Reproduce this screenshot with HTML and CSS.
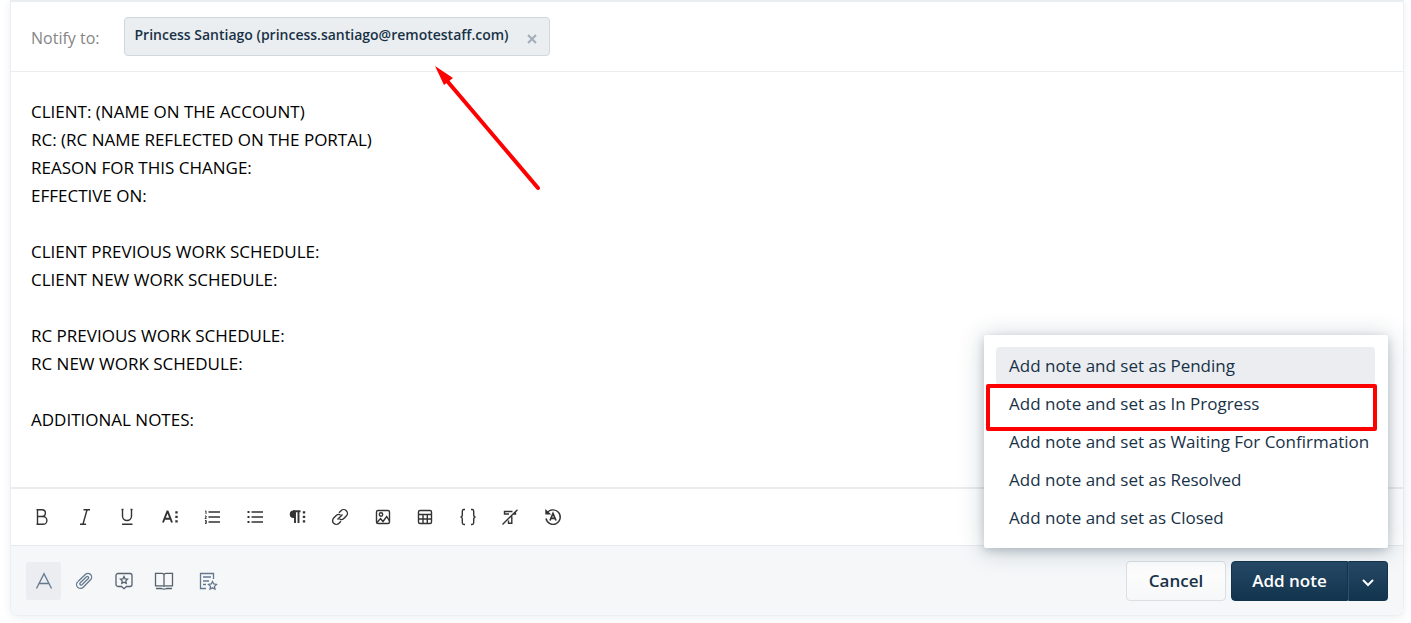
FILE: index.html
```html
<!DOCTYPE html>
<html lang="en">
<head>
<meta charset="utf-8">
<title>Add note</title>
<link rel="stylesheet" href="styles.css">
</head>
<body>
<form class="composer">
  <div class="notify">
    <span class="notify-label">Notify to:</span>
    <span class="chip">
      <span class="chip-text">Princess Santiago (princess.santiago@remotestaff.com)</span>
      <button type="button" class="chip-remove" aria-label="Remove recipient">
        <svg width="10" height="10" viewBox="0 0 10 10"><path d="M1 1l8 8M9 1L1 9"/></svg>
      </button>
    </span>
    <svg class="arrow" width="112" height="130" viewBox="0 0 112 130" aria-hidden="true">
      <path d="M13 16L103 122" stroke="#f00" stroke-width="4" stroke-linecap="round"/>
      <path d="M0 0L18 12L9 19Z" fill="#f00"/>
    </svg>
  </div>

  <textarea class="editor" rows="12" aria-label="Note" spellcheck="false">CLIENT: (NAME ON THE ACCOUNT)
RC: (RC NAME REFLECTED ON THE PORTAL)
REASON FOR THIS CHANGE:
EFFECTIVE ON:

CLIENT PREVIOUS WORK SCHEDULE:
CLIENT NEW WORK SCHEDULE:

RC PREVIOUS WORK SCHEDULE:
RC NEW WORK SCHEDULE:

ADDITIONAL NOTES:</textarea>

  <div class="toolbar">
    <div class="tools">
      <button type="button" class="tool" aria-label="Bold"><svg viewBox="0 0 20 20"><path d="M5.500 2.700v14.600M4.500 2.700H10a3.400 3.400 0 0 1 0 6.800H5.500M10 9.500h1a3.900 3.900 0 0 1 0 7.800H4.500"/></svg></button>
      <button type="button" class="tool" aria-label="Italic"><svg viewBox="0 0 20 20"><path d="M8.500 2.700H15M5 17.300h6M12 3L8 17"/></svg></button>
      <button type="button" class="tool" aria-label="Underline"><svg viewBox="0 0 20 20"><path d="M5.500 2.500V9a4.500 4.500 0 0 0 9 0V2.500M4.500 2.500h2M13.500 2.500h2M5 17.300h10.500"/></svg></button>
      <button type="button" class="tool" aria-label="Font size"><svg viewBox="0 0 20 20"><path stroke-width="1.900" d="M3 15.500L7.300 4.500h.4L12 15.500M4.700 11.700h5.600"/><path stroke-width="2.400" d="M15.300 5.400h2.400M15.300 9.900h2.400M15.300 14.400h2.400"/></svg></button>
      <button type="button" class="tool" aria-label="Numbered list"><svg viewBox="0 0 20 20"><path d="M6.500 5H18M6.500 10H18M6.500 15H18"/><path stroke-width="1" d="M3 4h1v3M3 9h1.200v1L3 11.500h1.500M3 13.500h1.300v3H3M3 15h1"/></svg></button>
      <button type="button" class="tool" aria-label="Bulleted list"><svg viewBox="0 0 20 20"><path d="M6.500 5H18M6.500 10H18M6.500 15H18"/><path stroke-width="2" d="M2.500 5h2M2.500 10h2M2.500 15h2"/></svg></button>
      <button type="button" class="tool" aria-label="Paragraph"><svg viewBox="0 0 20 20"><path fill="#333" stroke="none" d="M8 3.500v7.500H6.500A3.700 3.700 0 0 1 6.500 3.500z"/><path stroke-width="1.900" d="M6 4.300h7.500M8 4v12M11.500 4v12"/><path stroke-width="2.400" d="M15.800 5.400h2.400M15.800 9.900h2.400M15.800 14.400h2.400"/></svg></button>
      <button type="button" class="tool" aria-label="Link"><svg viewBox="0 0 20 20"><path d="M9 5.700l2-2a3.700 3.700 0 0 1 5.300 5.300l-2.500 2.500a3.700 3.700 0 0 1-4.300.600M11 14.300l-2 2A3.700 3.700 0 0 1 3.700 11l2.500-2.500a3.700 3.700 0 0 1 4.300-.600M7.500 12.500l5-5"/></svg></button>
      <button type="button" class="tool" aria-label="Image"><svg viewBox="0 0 20 20"><rect x="3.500" y="3.500" width="13" height="13" rx="1.500"/><circle cx="8" cy="7.500" r="1.700"/><path d="M4 15.500l3.500-4 2.500 3 3.700-5 2.800 4.500"/></svg></button>
      <button type="button" class="tool" aria-label="Table"><svg viewBox="0 0 20 20"><rect x="3.500" y="3.500" width="13" height="13" rx="1.500"/><path d="M3.500 7.500h13M3.500 12h13M8 7.500v9M12.300 7.500v9"/></svg></button>
      <button type="button" class="tool" aria-label="Code"><svg viewBox="0 0 20 20"><path d="M7 2.500H6A1.700 1.700 0 0 0 4.300 4.200v3.500Q4.300 10 2.500 10q1.800 0 1.800 2.300v3.500A1.700 1.700 0 0 0 6 17.500h1M13 2.500h1a1.700 1.700 0 0 1 1.700 1.700v3.500q0 2.300 1.800 2.300-1.800 0-1.800 2.300v3.500a1.700 1.700 0 0 1-1.700 1.700h-1"/></svg></button>
      <button type="button" class="tool" aria-label="Clear formatting"><svg viewBox="0 0 20 20"><path d="M12.500 4.500H4.500v2.500h4.500M15.500 5.500V7h-3M8.500 13.500v2.700h3.300v-7M2.500 17.500L17.500 2.700"/></svg></button>
      <button type="button" class="tool" aria-label="Restore formatting"><svg viewBox="0 0 20 20"><path d="M4 6.200A7.200 7.200 0 1 1 3 11.500"/><path fill="#333" d="M3 3.500v3.300h3.500z"/><path stroke-width="1.700" d="M7 13.500l3-7 3 7M8.200 11.300h3.600"/></svg></button>
    </div>
  </div>

  <div class="footer">
    <div class="inserts">
      <button type="button" class="insert active" aria-label="Text formatting"><svg viewBox="0 0 20 20"><path d="M2.500 17.500L10 2.800l7.500 14.700M5.300 12.500h9.400"/></svg></button>
      <button type="button" class="insert" aria-label="Attach file"><svg viewBox="0 0 20 20"><path d="M4 10.500l7.300-7a3.700 3.700 0 0 1 5.200 5.300L9.300 16.300a3.900 3.900 0 0 1-5.600-5.500M5.800 12.300l6.700-6.500a1.200 1.200 0 0 1 1.800 1.700L8 13.800a1.400 1.400 0 0 1-2.200-1.500"/></svg></button>
      <button type="button" class="insert" aria-label="Canned responses"><svg class="dark" viewBox="0 0 20 20"><path d="M4 2.500h12A2 2 0 0 1 18 4.500v9a2 2 0 0 1-2 2h-3.500L10 17.700l-2.500-2.200H4a2 2 0 0 1-2-2v-9a2 2 0 0 1 2-2z"/><path d="M10 5.500l1.100 2.300 2.500.300-1.800 1.800.4 2.500L10 11.200l-2.200 1.200.4-2.500-1.800-1.800 2.500-.300z"/></svg></button>
      <button type="button" class="insert" aria-label="Solution articles"><svg class="dark" viewBox="0 0 20 20"><path d="M10 3.500Q9.500 2.300 8 2.300H1.500v12.500h6.500q2 0 2 1 0-1 2-1h6.500V2.300H12q-1.500 0-2 1.200v12M2 17.500h5.500q2.500 1.300 5 0H18"/></svg></button>
      <button type="button" class="insert wide" aria-label="Templates"><svg viewBox="0 0 20 20"><path d="M8 17.500H2.500v-15h13V8M5 6h8M5 10h6M5 13.500h3"/><path d="M14.500 10.500l1.200 2.500 2.800.4-2 2 .5 2.700-2.500-1.300-2.500 1.300.5-2.700-2-2 2.800-.4z"/></svg></button>
    </div>
    <div class="actions">
      <button type="button" class="btn cancel">Cancel</button>
      <div class="split">
        <button type="submit" class="btn primary">Add note</button>
        <button type="button" class="btn toggle" aria-label="More options" aria-expanded="true"><svg width="14" height="10" viewBox="0 0 14 10"><path d="M2.500 2.500L7 7l4.500-4.500"/></svg></button>
        <div class="menu" role="menu">
          <button type="button" class="item selected" role="menuitem">Add note and set as Pending</button>
          <button type="button" class="item marked" role="menuitem">Add note and set as In Progress</button>
          <button type="button" class="item" role="menuitem">Add note and set as Waiting For Confirmation</button>
          <button type="button" class="item" role="menuitem">Add note and set as Resolved</button>
          <button type="button" class="item" role="menuitem">Add note and set as Closed</button>
        </div>
      </div>
    </div>
  </div>
</form>
</body>
</html>
```
FILE: styles.css
```css
* { box-sizing: border-box; }

body {
  margin: 0;
  padding: 0 7px 8px 10px;
  background: #fff;
  font-family: "Segoe UI", "Open Sans", "Noto Sans", sans-serif;
  color: #183247;
}

button, textarea { font: inherit; color: inherit; }
button { padding: 0; border: 0; background: none; cursor: pointer; }
svg { display: block; fill: none; }

.composer {
  border: 1px solid #ebeff3;
  border-top: 2px solid #ebeef0;
  border-radius: 0 0 8px 8px;
  box-shadow: 0 2px 8px rgba(24, 50, 71, 0.08);
}

.notify {
  position: relative;
  display: flex;
  align-items: center;
  gap: 24px;
  height: 70px;
  padding: 0 20px;
  border-bottom: 1px solid #ebeef0;
}
.notify-label { font-size: 16px; line-height: 24px; color: #858585; padding-top: 2px; }

.chip {
  display: flex;
  align-items: center;
  gap: 18px;
  height: 39px;
  padding: 0 12px 0 10px;
  border: 1px solid #cfd7df;
  border-radius: 4px;
  background: #ebeef0;
}
.chip-text { font-size: 14px; font-weight: 600; line-height: 20px; padding-bottom: 4px; }
.chip-remove { padding-top: 4px; stroke: #a3adb8; stroke-width: 2; }

.arrow { position: absolute; left: 424px; top: 64px; }

.editor {
  display: block;
  width: 100%;
  height: auto;
  padding: 26px 20px 53px;
  border: 0;
  outline: 0;
  resize: none;
  overflow: hidden;
  background: transparent;
  color: #000;
  font-size: 17px;
  line-height: 28px;
}

.toolbar {
  padding: 0 10px;
  border-top: 2px solid #ebeced;
}
.tools {
  display: grid;
  grid-template-columns: repeat(13, 1fr);
  max-width: 553px;
}
.tool {
  display: grid;
  place-items: center;
  height: 56px;
}
.tool svg { width: 20px; height: 20px; stroke: #333; stroke-width: 1.4; }

.footer {
  display: flex;
  justify-content: space-between;
  align-items: center;
  height: 70px;
  padding: 0 15px;
  border-top: 1px solid #e6eaee;
  border-radius: 0 0 8px 8px;
  background: #f5f7f9;
}
.inserts { display: flex; gap: 5px; }
.insert {
  display: grid;
  place-items: center;
  width: 35px;
  height: 38px;
  border-radius: 3px;
}
.insert.wide { margin-left: 4px; }
.insert.active { background: #ebedf1; }
.insert svg { width: 20px; height: 20px; stroke: #64798e; stroke-width: 1.3; }
.insert svg.dark { stroke: #56616d; }

.actions { display: flex; gap: 5px; }
.btn {
  height: 40px;
  font-size: 17px;
  font-weight: 600;
  border-radius: 4px;
}
.cancel {
  width: 100px;
  border: 1px solid #dadfe3;
  background: linear-gradient(#fff, #f6f7f8);
}
.split { position: relative; display: flex; }
.primary, .toggle {
  border: 1px solid #12344d;
  background: linear-gradient(#264966, #12344d);
  color: #fff;
}
.primary { width: 117px; border-radius: 4px 0 0 4px; }
.toggle {
  display: grid;
  place-items: center;
  width: 40px;
  border-left-color: #2d506b;
  border-radius: 0 4px 4px 0;
}
.toggle svg { stroke: #fff; stroke-width: 2; stroke-linecap: round; margin-top: 4px; }

.menu {
  position: absolute;
  right: 0;
  bottom: calc(100% + 13px);
  display: flex;
  flex-direction: column;
  width: 404px;
  padding: 12px 13px 11px 12px;
  border-radius: 2px;
  background: #fff;
  box-shadow: 0 2px 24px rgba(24, 50, 71, 0.25), 0 3px 8px rgba(24, 50, 71, 0.18);
}
.item {
  position: relative;
  height: 38px;
  padding: 0 13px;
  border-radius: 4px;
  text-align: left;
  font-size: 17px;
  white-space: nowrap;
}
.item.selected { background: #ebedf1; }
.marked::after {
  content: "";
  position: absolute;
  inset: -1px -2px -8px -10px;
  border: 4px solid #f00;
  border-radius: 2px;
}
```
